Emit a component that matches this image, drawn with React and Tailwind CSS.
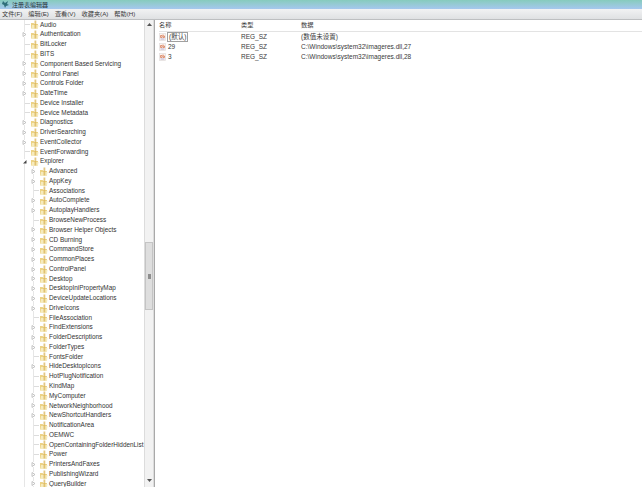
const rows = [
  ["Audio", 0, 0],
  ["Authentication", 0, 1],
  ["BitLocker", 0, 0],
  ["BITS", 0, 0],
  ["Component Based Servicing", 0, 1],
  ["Control Panel", 0, 1],
  ["Controls Folder", 0, 1],
  ["DateTime", 0, 1],
  ["Device Installer", 0, 0],
  ["Device Metadata", 0, 0],
  ["Diagnostics", 0, 1],
  ["DriverSearching", 0, 1],
  ["EventCollector", 0, 1],
  ["EventForwarding", 0, 0],
  ["Explorer", 0, 2],
  ["Advanced", 1, 1],
  ["AppKey", 1, 1],
  ["Associations", 1, 0],
  ["AutoComplete", 1, 1],
  ["AutoplayHandlers", 1, 1],
  ["BrowseNewProcess", 1, 0],
  ["Browser Helper Objects", 1, 1],
  ["CD Burning", 1, 1],
  ["CommandStore", 1, 1],
  ["CommonPlaces", 1, 1],
  ["ControlPanel", 1, 1],
  ["Desktop", 1, 1],
  ["DesktopIniPropertyMap", 1, 1],
  ["DeviceUpdateLocations", 1, 1],
  ["DriveIcons", 1, 1],
  ["FileAssociation", 1, 0],
  ["FindExtensions", 1, 1],
  ["FolderDescriptions", 1, 1],
  ["FolderTypes", 1, 1],
  ["FontsFolder", 1, 0],
  ["HideDesktopIcons", 1, 1],
  ["HotPlugNotification", 1, 0],
  ["KindMap", 1, 0],
  ["MyComputer", 1, 1],
  ["NetworkNeighborhood", 1, 1],
  ["NewShortcutHandlers", 1, 1],
  ["NotificationArea", 1, 0],
  ["OEMWC", 1, 0],
  ["OpenContainingFolderHiddenList", 1, 0],
  ["Power", 1, 0],
  ["PrintersAndFaxes", 1, 1],
  ["PublishingWizard", 1, 1],
  ["QueryBuilder", 1, 1],
];

const values = [
  ["(默认)", "REG_SZ", "(数值未设置)", true],
  ["29", "REG_SZ", "C:\\Windows\\system32\\imageres.dll,27"],
  ["3", "REG_SZ", "C:\\Windows\\system32\\imageres.dll,28"],
];

function Folder() {
  return (
    <svg width="9" height="9" viewBox="0 0 9 9" className="shrink-0">
      <path d="M1 3h2.500l1 1H8v4.500H1z" fill="#ecd284" />
      <path d="M2 5h6.500L8 8.500H1.500z" fill="#f6ebbd" />
      <path d="M4.500 .5h1.800v8H4.500z" fill="#d9b458" opacity="0.75" />
    </svg>
  );
}

function Arrow({ kind }) {
  if (kind === 0) {
    return (
      <span className="-ml-[3px] flex w-[8px] shrink-0 justify-end">
        <span className="h-px w-[5px] bg-[#dcdcdc]" />
      </span>
    );
  }
  return (
    <span className="-ml-[3px] flex w-[8px] shrink-0">
      <svg width="5" height="5" viewBox="0 0 5 5" className="shrink-0 bg-white">
        {kind === 2 ? (
          <path d="M4.500 1v3.500H1z" fill="#444" />
        ) : (
          <path d="M1 .5l3 2-3 2z" fill="none" stroke="#b4b4b4" strokeWidth="0.8" />
        )}
      </svg>
    </span>
  );
}

function TreeRow({ name, depth, kind }) {
  return (
    <div className="flex h-[9.77px] items-center pl-[24px]">
      {/* tree guide lines */}
      <span className="h-full w-px shrink-0 bg-[#e6e6e6]" />
      {depth === 1 && <span className="ml-[8px] h-full w-px shrink-0 bg-[#e6e6e6]" />}
      <Arrow kind={kind} />
      <Folder />
      <span className="ml-[1px] whitespace-nowrap text-[6.4px] leading-none text-[#333]">{name}</span>
    </div>
  );
}

function RegIcon() {
  return (
    <svg width="7" height="8" viewBox="0 0 7 8" className="shrink-0">
      <rect x="0.5" y="0.500" width="6" height="7" fill="#faf6f3" stroke="#e2dcdc" strokeWidth="0.7" />
      <path d="M1.500 2.500h1.500v2h-1.500zM4 1.500v3h1.500v-1.500H4" fill="none" stroke="#d9805a" strokeWidth="0.8" />
      <path d="M1.500 6h4" stroke="#a89fc9" strokeWidth="0.8" />
    </svg>
  );
}

export default function App() {
  return (
    <div className="flex h-[487px] w-[642px] flex-col overflow-hidden bg-white font-['Liberation_Sans','Noto_Sans_CJK_SC',sans-serif] text-[#3a3a3a]">
      {/* window title */}
      <div className="flex h-[9px] shrink-0 items-center bg-gradient-to-b from-[#86cbbd] to-[#a5c7ee] pl-[2px]">
        <svg width="8" height="9" viewBox="0 0 8 9" className="shrink-0">
          <path d="M1 1l2 2 3-2-1 3 2 1-3 1-1 2-1-3-2-1z" fill="#2f6f7a" />
        </svg>
        <span className="ml-[2px] text-[6px] leading-none text-[#24323a]">注册表编辑器</span>
      </div>
      {/* menu */}
      <div className="flex h-[11px] shrink-0 items-center gap-[6px] border-b border-[#bdbfc1] bg-gradient-to-b from-[#f1f2f3] to-[#dfe1e3] pl-[2px] text-[6.2px] leading-none">
        <span>文件(F)</span>
        <span>编辑(E)</span>
        <span>查看(V)</span>
        <span>收藏夹(A)</span>
        <span>帮助(H)</span>
      </div>

      <div className="flex min-h-0 flex-1">
        {/* tree */}
        <div className="flex w-[155px] shrink-0 border-r border-[#a9a9a9]">
          <div className="min-w-0 flex-1 overflow-hidden">
            {rows.map(([name, depth, kind]) => (
              <TreeRow key={name} name={name} depth={depth} kind={kind} />
            ))}
          </div>
          <div className="flex w-[10px] shrink-0 flex-col items-center border-x border-[#dcdcdc] bg-[#f2f2f2] pt-[3px]">
            <svg width="5" height="3" viewBox="0 0 5 3" className="shrink-0"><path d="M0 3l2.500-3L5 3z" fill="#555" /></svg>
            <div className="mt-[216px] flex h-[68px] w-[8px] shrink-0 items-center justify-center border border-[#c4c4c4] bg-[#dedede]">
              <div className="h-[5px] w-[3px] bg-[#8e8e8e]" />
            </div>
            <svg className="mt-[169px] shrink-0" width="5" height="3" viewBox="0 0 5 3"><path d="M0 0l2.500 3L5 0z" fill="#555" /></svg>
          </div>
        </div>

        {/* values */}
        <div className="min-w-0 flex-1 pl-[4px]">
          <div className="flex h-[12px] items-center border-b border-[#e3e3e3] text-[6.2px] leading-none">
            <span className="w-[82px]">名称</span>
            <span className="w-[60px]">类型</span>
            <span>数据</span>
          </div>
          {values.map(([name, type, data, selected]) => (
            <div key={name} className="flex h-[10px] items-center text-[6.5px] leading-none">
              <div className="flex w-[82px] items-center">
                <RegIcon />
                {selected ? (
                  <span className="ml-[1px] border border-[#a0a0a0] px-px py-[1px]">{name}</span>
                ) : (
                  <span className="pl-[2px]">{name}</span>
                )}
              </div>
              <span className="w-[60px]">{type}</span>
              <span className="whitespace-nowrap">{data}</span>
            </div>
          ))}
        </div>
      </div>
    </div>
  );
}
